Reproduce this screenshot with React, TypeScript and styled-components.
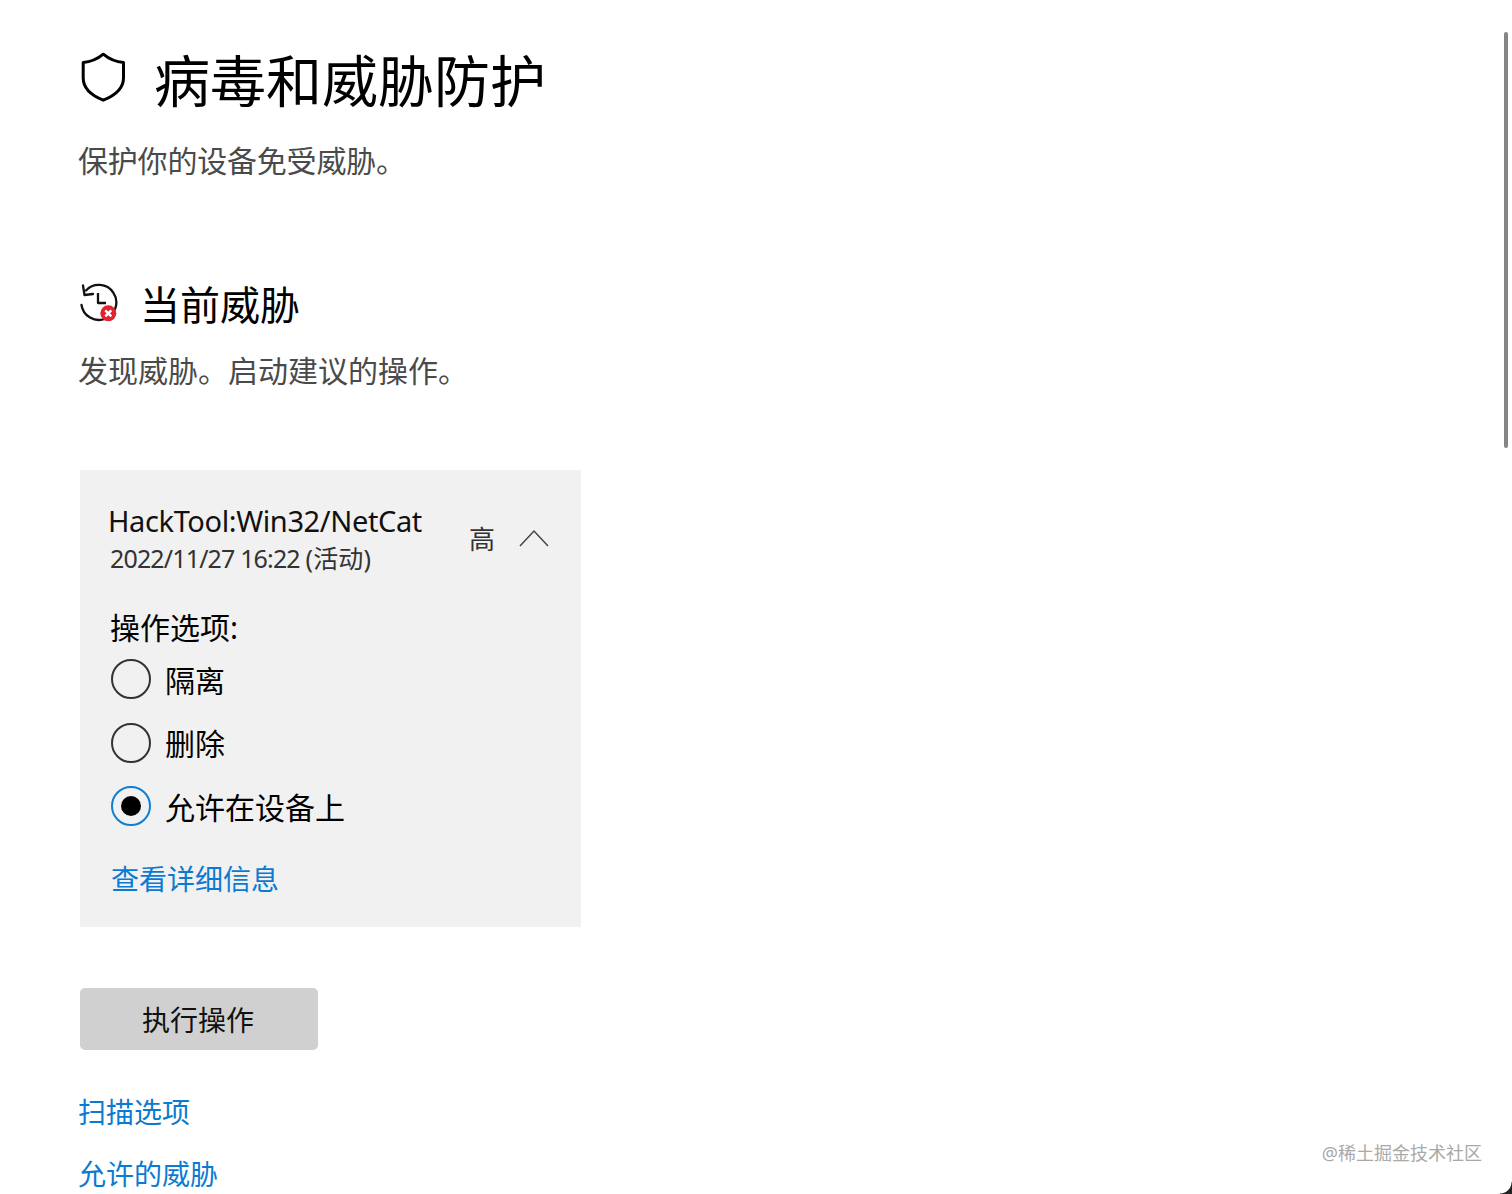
import React from "react";
import styled, { createGlobalStyle } from "styled-components";

const GlobalStyle = createGlobalStyle`
  html, body {
    margin: 0;
    padding: 0;
    background: #fff;
    overflow: hidden;
  }
  body {
    font-family: "Noto Sans", "Noto Sans CJK SC", sans-serif;
    color: #000;
  }
`;

const Page = styled.div`
  position: relative;
  width: 1512px;
  height: 1194px;
  overflow: hidden;
  box-sizing: border-box;
  padding: 46px 0 0 79px;
`;

const TitleRow = styled.div`
  display: flex;
  align-items: flex-start;
  gap: 27px;
  height: 68px;

  svg {
    margin-top: 4px;
  }
`;

const Title = styled.h1`
  margin: 0;
  font-size: 56px;
  line-height: 68px;
  font-weight: 400;
  color: #000;
`;

const Description = styled.p`
  margin: 0 0 0 -1px;
  font-size: 30px;
  line-height: 42px;
  color: #4a4a4a;
`;

const Intro = styled(Description)`
  margin-top: 26px;
  letter-spacing: -0.2px;
`;

const SectionRow = styled.div`
  display: flex;
  align-items: flex-start;
  gap: 21px;
  height: 48px;
  margin-top: 99px;

  svg {
    margin-top: 2px;
    flex: none;
  }
`;

const SectionTitle = styled.h2`
  margin: 0;
  font-size: 40px;
  line-height: 48px;
  font-weight: 400;
`;

const SectionText = styled(Description)`
  margin-top: 21px;
`;

const Card = styled.section`
  box-sizing: border-box;
  width: 501px;
  height: 457px;
  margin: 78px 0 0 1px;
  padding: 31px 32px 0 30px;
  background: #f1f1f1;
`;

const CardHead = styled.div`
  display: flex;
  align-items: center;

  svg {
    margin-bottom: 2px;
  }
`;

const ThreatInfo = styled.div`
  flex: 1;
`;

const ThreatName = styled.div`
  font-size: 29px;
  line-height: 40px;
  margin-left: -2px;
  letter-spacing: -0.38px;
  color: #111;
`;

const ThreatDate = styled.div`
  font-size: 25px;
  line-height: 35px;
  letter-spacing: -0.85px;
  color: #333;
`;

const ThreatStatus = styled.span`
  letter-spacing: 0.2px;
`;

const Severity = styled.span`
  font-size: 26px;
  line-height: 36px;
  color: #333;
  margin-right: 24px;
`;

const OptionsLabel = styled.div`
  margin-top: 31px;
  font-size: 30px;
  line-height: 42px;
`;

const OptionList = styled.div`
  display: flex;
  flex-direction: column;
  gap: 23.5px;
  margin-top: 10px;
`;

const Option = styled.label`
  display: flex;
  align-items: center;
  gap: 14px;
  height: 40px;
  font-size: 30px;
  padding-left: 1px;
`;

const OptionText = styled.span`
  margin-top: -1px;
`;

const RadioMark = styled.span<{ $checked?: boolean }>`
  box-sizing: border-box;
  display: flex;
  align-items: center;
  justify-content: center;
  width: 40px;
  height: 40px;
  border-radius: 50%;
  border: 2px solid ${(p) => (p.$checked ? "#0f7fd4" : "#333")};

  &::after {
    content: "";
    display: ${(p) => (p.$checked ? "block" : "none")};
    width: 20px;
    height: 20px;
    border-radius: 50%;
    background: #000;
  }
`;

const TextLink = styled.a`
  display: block;
  font-size: 28px;
  line-height: 40px;
  color: #0b7ad1;
  text-decoration: none;
`;

const DetailsLink = styled(TextLink)`
  margin: 33px 0 0 1px;
`;

const ActionButton = styled.button`
  display: block;
  width: 238px;
  height: 62px;
  margin: 61px 0 0 1px;
  padding: 0 2px 0 0;
  border: 0;
  border-radius: 5px;
  background: #d0d0d0;
  font-family: inherit;
  font-size: 28px;
  color: #111;
`;

const LinkList = styled.nav`
  display: flex;
  flex-direction: column;
  gap: 22px;
  margin: 42px 0 0 -1px;
`;

const Watermark = styled.span`
  position: absolute;
  right: 30px;
  bottom: 28px;
  font-size: 18px;
  line-height: 26px;
  color: #a9a9a9;
`;

const ScrollThumb = styled.div`
  position: absolute;
  top: 32px;
  right: 4px;
  width: 4px;
  height: 416px;
  border-radius: 2px;
  background: #858585;
`;

const WindowCorner = styled.div`
  position: absolute;
  right: 0;
  bottom: 0;
  width: 12px;
  height: 12px;
  background: radial-gradient(circle at 0 0, transparent 11px, #222 12px);
`;

const ShieldIcon = () => (
  <svg width="48" height="54" viewBox="0 0 48 54" fill="none">
    <path
      d="M24.300 4.200 C30 9 37 12 44.500 12.500 V28 C44.500 38 36 45.500 24.300 50.200 C12.500 45.500 4.200 38 4.200 28 V12.500 C11.500 12 18.500 9 24.300 4.200 Z"
      stroke="#000"
      strokeWidth="3"
      strokeLinejoin="round"
    />
  </svg>
);

const HistoryAlertIcon = () => (
  <svg width="40" height="40" viewBox="0 0 40 40" fill="none">
    <path d="M7 7.500 A17.500 17.500 0 1 1 2.500 22" stroke="#111" strokeWidth="2.300" strokeLinecap="round" />
    <path d="M4 2.500 L5.500 12 L14 11" stroke="#111" strokeWidth="2.300" strokeLinecap="round" strokeLinejoin="round" />
    <path d="M19 10 V20 H27" stroke="#111" strokeWidth="2.300" strokeLinejoin="round" />
    <circle cx="29.300" cy="30.300" r="8" fill="#e3222f" />
    <path d="M26.300 27.300 L32.300 33.300 M32.300 27.300 L26.300 33.300" stroke="#fff" strokeWidth="2.400" />
  </svg>
);

const ChevronUp = () => (
  <svg width="30" height="18" viewBox="0 0 30 18" fill="none">
    <path d="M1 17 L15 2 L29 17" stroke="#444" strokeWidth="1.500" />
  </svg>
);

const options = [
  { label: "隔离", checked: false },
  { label: "删除", checked: false },
  { label: "允许在设备上", checked: true },
];

export default function App() {
  return (
    <Page>
      <GlobalStyle />
      <TitleRow>
        <ShieldIcon />
        <Title>病毒和威胁防护</Title>
      </TitleRow>
      <Intro>保护你的设备免受威胁。</Intro>

      <SectionRow>
        <HistoryAlertIcon />
        <SectionTitle>当前威胁</SectionTitle>
      </SectionRow>
      <SectionText>发现威胁。启动建议的操作。</SectionText>

      <Card>
        <CardHead>
          <ThreatInfo>
            <ThreatName>HackTool:Win32/NetCat</ThreatName>
            <ThreatDate>
              2022/11/27 16:22 <ThreatStatus>(活动)</ThreatStatus>
            </ThreatDate>
          </ThreatInfo>
          <Severity>高</Severity>
          <ChevronUp />
        </CardHead>
        <OptionsLabel>操作选项:</OptionsLabel>
        <OptionList>
          {options.map((o) => (
            <Option key={o.label}>
              <RadioMark $checked={o.checked} />
              <OptionText>{o.label}</OptionText>
            </Option>
          ))}
        </OptionList>
        <DetailsLink href="#">查看详细信息</DetailsLink>
      </Card>

      <ActionButton>执行操作</ActionButton>
      <LinkList>
        <TextLink href="#">扫描选项</TextLink>
        <TextLink href="#">允许的威胁</TextLink>
      </LinkList>

      <Watermark>@稀土掘金技术社区</Watermark>
      <ScrollThumb />
      <WindowCorner />
    </Page>
  );
}
